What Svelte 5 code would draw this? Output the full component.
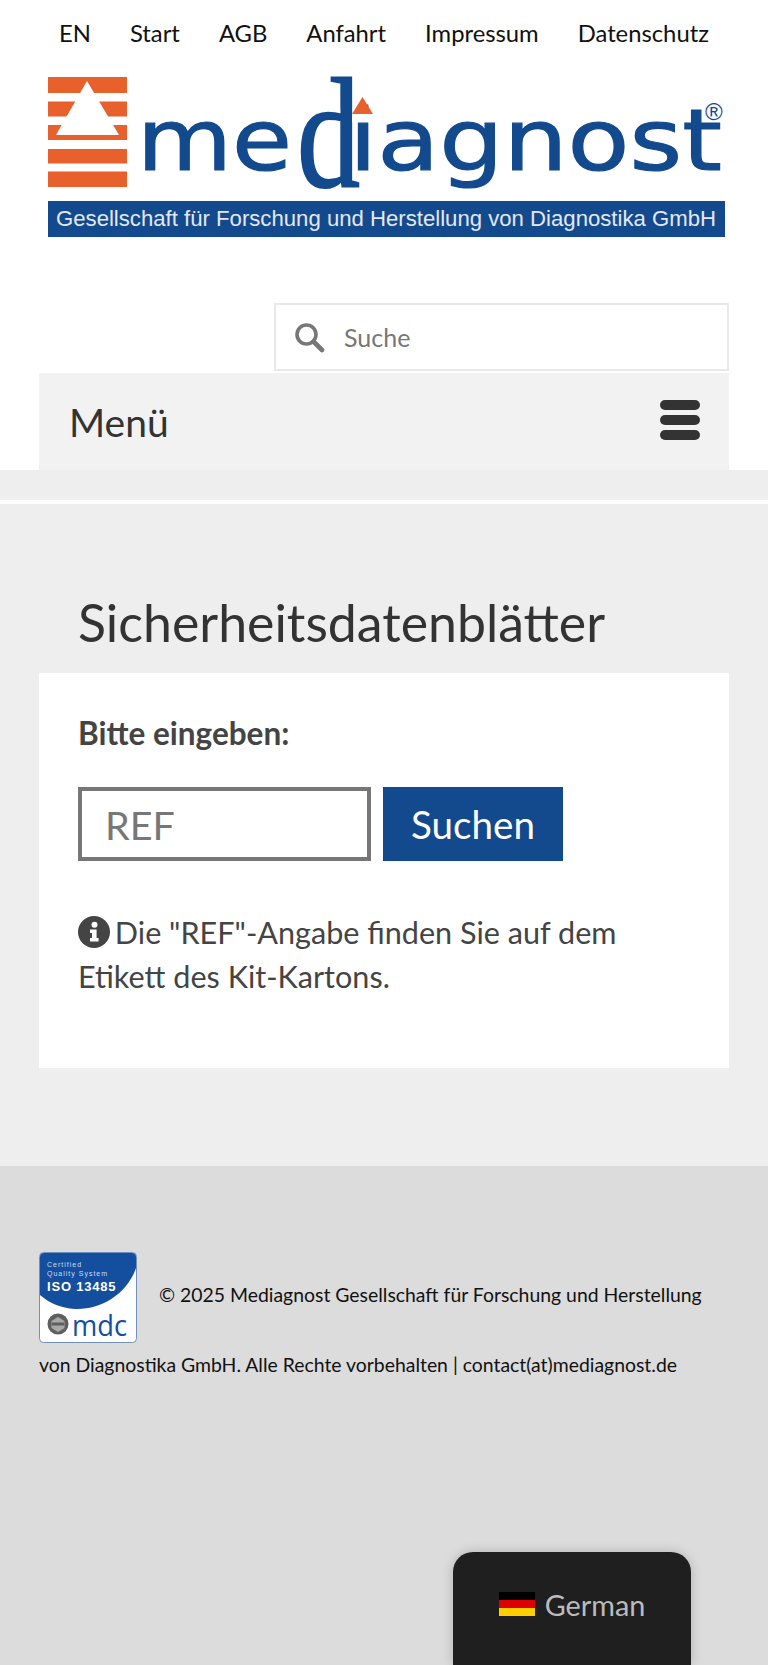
<script lang="ts">
	const links = ["EN", "Start", "AGB", "Anfahrt", "Impressum", "Datenschutz"];
</script>

<div class="page">
	<nav class="top">
		{#each links as link}
			<span>{link}</span>
		{/each}
	</nav>

	<div class="logo">
		<svg viewBox="0 0 678 162" width="678" height="162" role="img" aria-label="mediagnost">
			<!-- pyramid mark -->
			<g fill="#e8602c">
				<rect x="1" y="1" width="79" height="16" />
				<rect x="1" y="25.5" width="79" height="15" />
				<rect x="1" y="49" width="79" height="15" />
				<rect x="1" y="73" width="79" height="14.5" />
				<rect x="1" y="95.5" width="79" height="15.5" />
			</g>
			<path d="M40 5 L72 59 L9 59 Z" fill="#fff" />
			<text class="word" x="90" y="94" textLength="155" lengthAdjust="spacingAndGlyphs">me</text>
			<text class="big-d" x="250" y="110" textLength="63" lengthAdjust="spacingAndGlyphs">d</text>
			<text class="word" x="302" y="94" textLength="373" lengthAdjust="spacingAndGlyphs">iagnost</text>
			<path d="M305 38 H326 V46 H305 Z" fill="#fff" />
			<path d="M315.5 21 L326 38 L305 38 Z" fill="#e8602c" />
			<text class="reg" x="658" y="44">®</text>
			<rect x="1" y="125" width="678" height="36" fill="#134a8e" />
			<text class="tag" x="9" y="150" textLength="660" lengthAdjust="spacingAndGlyphs">Gesellschaft für Forschung und Herstellung von Diagnostika GmbH</text>
		</svg>
	</div>

	<div class="search-row">
		<div class="search">
			<svg class="glass" viewBox="0 0 32 32" width="32" height="32" aria-hidden="true">
				<circle cx="13.5" cy="13.5" r="9.5" fill="none" stroke="#777" stroke-width="3.6" />
				<path d="M20.5 20.5 L29 29" stroke="#777" stroke-width="4.6" stroke-linecap="round" />
			</svg>
			<span>Suche</span>
		</div>
	</div>

	<div class="menu-wrap">
		<div class="menu">
			<span>Menü</span>
			<div class="burger"><i></i><i></i><i></i></div>
		</div>
	</div>

	<div class="band"></div>

	<main>
		<h1>Sicherheitsdatenblätter</h1>
		<section class="card">
			<p class="label">Bitte eingeben:</p>
			<div class="form">
				<div class="input">REF</div>
				<div class="btn">Suchen</div>
			</div>
			<p class="hint">
				<svg viewBox="0 0 32 32" width="32" height="32" aria-hidden="true">
					<circle cx="16" cy="16" r="16" fill="#444" />
					<circle cx="16.5" cy="8.8" r="3" fill="#fff" />
					<path d="M12 13.5 H18.6 V22 H20.6 V25.5 H12 V22 H14 V17 H12 Z" fill="#fff" />
				</svg>
				Die "REF"-Angabe finden Sie auf dem Etikett des Kit-Kartons.
			</p>
		</section>
	</main>

	<footer>
		<p>
			<svg class="badge" viewBox="0 0 98 91" width="98" height="91" role="img" aria-label="ISO 13485">
				<rect x=".5" y=".5" width="97" height="90" rx="4" fill="#fff" stroke="#6f8fbd" />
				<path d="M1 5 Q1 1 5 1 H93 Q97 1 97 5 V16 C88 42 62 58 36 57 C22 56 10 51 1 43 Z" fill="#134f9e" />
				<text class="cert" x="8" y="15">Certified</text>
				<text class="cert" x="8" y="24">Quality System</text>
				<text class="iso" x="8" y="39">ISO 13485</text>
				<circle cx="19" cy="72" r="10.5" fill="#5f5f5f" />
				<path d="M19 65 L25.5 69 V76 L19 80 L12.5 76 V69 Z" fill="#a8a8a8" />
				<path d="M13 72 H25" stroke="#5f5f5f" stroke-width="3" />
				<text class="mdc" x="33" y="84" textLength="55" lengthAdjust="spacingAndGlyphs">mdc</text>
			</svg>
			© 2025 Mediagnost Gesellschaft für Forschung und Herstellung von Diagnostika GmbH. Alle Rechte vorbehalten | contact(at)mediagnost.de
		</p>
	</footer>

	<div class="lang">
		<svg viewBox="0 0 36 24" width="36" height="24" aria-hidden="true">
			<rect width="36" height="8" fill="#000" />
			<rect y="8" width="36" height="8" fill="#dd0000" />
			<rect y="16" width="36" height="8" fill="#ffce00" />
		</svg>
		<span>German</span>
	</div>
</div>

<style>
	:global(body) {
		margin: 0;
		background: #fff;
	}

	.page {
		position: relative;
		width: 768px;
		height: 1665px;
		overflow: hidden;
		font-family: Lato, "Open Sans", sans-serif;
		color: #333;
	}

	.top {
		display: flex;
		justify-content: center;
		gap: 39px;
		padding-top: 19px;
		height: 57px;
		box-sizing: border-box;
		font-size: 23.8px;
		line-height: 28px;
		color: #111;
	}

	.logo {
		padding: 19px 0 0 47px;
		height: 200px;
	}

	.logo svg {
		display: block;
	}

	.word {
		font-family: "DejaVu Sans", sans-serif;
		font-size: 86px;
		fill: #134a8e;
		stroke: #134a8e;
		stroke-width: 1.2px;
	}

	.big-d {
		font-family: "Liberation Serif", serif;
		font-size: 157px;
		fill: #134a8e;
		stroke: #134a8e;
		stroke-width: 2px;
	}

	.reg {
		font-family: "Liberation Sans", sans-serif;
		font-size: 24px;
		fill: #134a8e;
	}

	.tag {
		font-family: "Liberation Sans", sans-serif;
		font-size: 22px;
		fill: #e4e8f0;
	}

	.search-row {
		display: flex;
		justify-content: flex-end;
		padding: 27px 39px 2px 0;
		height: 68px;
	}

	.search {
		width: 455px;
		box-sizing: border-box;
		border: 2px solid #e8e8e8;
		display: flex;
		align-items: center;
		padding-left: 17px;
		gap: 19px;
		font-size: 25px;
		color: #777;
	}

	.menu-wrap {
		padding: 0 39px;
	}

	.menu {
		height: 97px;
		background: #f2f2f2;
		display: flex;
		align-items: center;
		justify-content: space-between;
		padding: 0 29px 0 30px;
		font-size: 39px;
		color: #333;
	}

	.burger {
		display: flex;
		flex-direction: column;
		gap: 5px;
		margin-bottom: 4px;
	}

	.burger i {
		display: block;
		width: 40px;
		height: 10px;
		border-radius: 5px;
		background: #333;
	}

	.band {
		height: 30px;
		background: #eee;
		margin-bottom: 4px;
	}

	main {
		background: #eee;
		height: 662px;
		padding: 0 39px;
		box-sizing: border-box;
	}

	h1 {
		margin: 0;
		padding: 87px 0 0 39px;
		height: 169px;
		box-sizing: border-box;
		font-size: 51.8px;
		line-height: 62px;
		font-weight: 400;
		color: #333;
	}

	.card {
		background: #fff;
		height: 395px;
		padding: 42px 39px 0;
		box-sizing: border-box;
	}

	.label {
		margin: 0 0 36px;
		font-size: 31.5px;
		line-height: 36px;
		font-weight: 700;
		color: #444;
	}

	.form {
		display: flex;
		gap: 12px;
	}

	.input {
		width: 293px;
		height: 74px;
		box-sizing: border-box;
		border: 4px solid #777;
		padding-left: 23px;
		display: flex;
		align-items: center;
		font-size: 39.5px;
		color: #777;
	}

	.btn {
		width: 180px;
		height: 74px;
		background: #134a8e;
		color: #fff;
		display: flex;
		align-items: center;
		justify-content: center;
		font-size: 38.6px;
	}

	.hint {
		margin: 50px 0 0;
		font-size: 30.6px;
		line-height: 44px;
		color: #444;
	}

	.hint svg {
		vertical-align: -4px;
		margin-right: -3px;
	}

	footer {
		background: #dcdcdc;
		height: 499px;
		padding: 86px 39px 0;
		box-sizing: border-box;
	}

	footer p {
		margin: 0;
		font-size: 19.4px;
		line-height: 44px;
		color: #111;
	}

	.badge {
		vertical-align: middle;
		margin-right: 17px;
	}

	.cert {
		font-family: "Liberation Sans", sans-serif;
		font-size: 7px;
		letter-spacing: 1px;
		fill: #cfdcf0;
	}

	.iso {
		font-family: "Liberation Sans", sans-serif;
		font-size: 13px;
		font-weight: 700;
		letter-spacing: 0.8px;
		fill: #fff;
	}

	.mdc {
		font-family: "Open Sans", sans-serif;
		font-size: 30px;
		fill: #134f9e;
	}

	.lang {
		position: absolute;
		left: 453px;
		top: 1552px;
		width: 238px;
		height: 113px;
		background: #1f1f1f;
		border-radius: 20px 20px 0 0;
		box-shadow: 0 0 12px rgba(0, 0, 0, 0.2);
		display: flex;
		align-items: flex-start;
		justify-content: center;
		gap: 10px;
		padding-top: 34px;
		box-sizing: border-box;
		font-size: 28.8px;
		line-height: 38px;
		color: #bbb;
	}

	.lang svg {
		margin-top: 6px;
		height: 24px;
	}
</style>
